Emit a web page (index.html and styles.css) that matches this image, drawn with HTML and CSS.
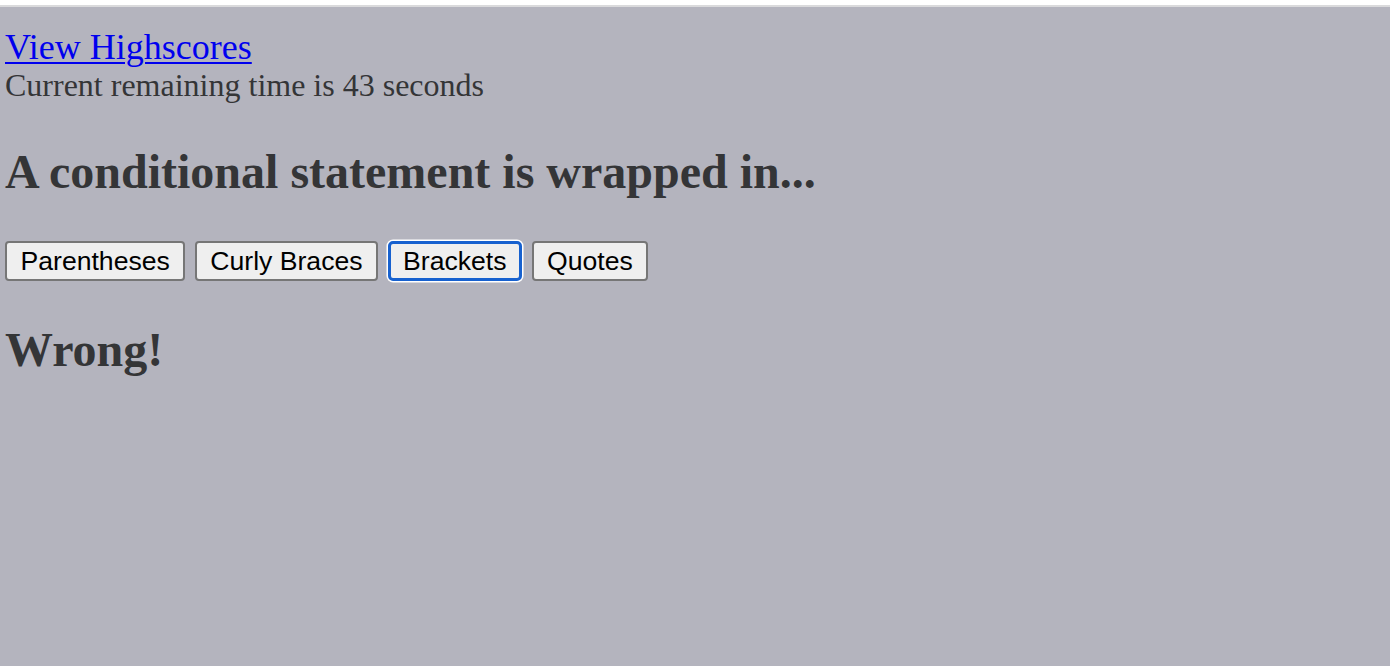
FILE: index.html
```html
<!DOCTYPE html>
<html lang="en">
<head>
<meta charset="utf-8">
<title>Code Quiz</title>
<link rel="stylesheet" href="styles.css">
</head>
<body>
<div class="topbar"></div>
<main class="page">
  <a class="scores" href="#">View Highscores</a>
  <p class="timer">Current remaining time is 43 seconds</p>
  <h2 class="question">A conditional statement is wrapped in...</h2>
  <div class="choices">
    <button class="choice">Parentheses</button>
    <button class="choice">Curly Braces</button>
    <button class="choice is-focused">Brackets</button>
    <button class="choice">Quotes</button>
  </div>
  <h2 class="result">Wrong!</h2>
</main>
</body>
</html>
```

FILE: styles.css
```css
html, body {
  margin: 0;
  padding: 0;
  height: 100%;
}

body {
  background: #b4b4be;
  color: #343537;
  font-family: "Liberation Serif", "Times New Roman", serif;
}

.topbar {
  height: 5px;
  background: #ffffff;
  border-bottom: 2px solid #dadadc;
}

.page {
  padding: 21px 5px 0 5px;
}

.scores {
  display: block;
  width: max-content;
  font-size: 36px;
  line-height: 38px;
  color: #0000ee;
  text-decoration: underline;
  text-decoration-thickness: 2px;
  text-underline-offset: 3px;
}

.timer {
  margin: 0;
  font-size: 32px;
  line-height: 38px;
}

.question,
.result {
  font-size: 48px;
  font-weight: bold;
  line-height: 55px;
  margin: 40px 0 42px 0;
}

.choices {
  display: flex;
  gap: 9.5px;
  align-items: flex-start;
}

.choice {
  font-family: "Liberation Sans", Arial, sans-serif;
  font-size: 26.6px;
  line-height: 30px;
  color: #000;
  background: #efefef;
  border: 2px solid #767676;
  border-radius: 4px;
  padding: 3px 13.5px;
  margin: 0;
}

.choice.is-focused {
  border: 3px solid #1761cf;
  padding: 2px 12.5px;
  border-radius: 5px;
  box-shadow: 0 0 0 1.5px #ffffff;
}

.result {
  margin-top: 41px;
}
```
